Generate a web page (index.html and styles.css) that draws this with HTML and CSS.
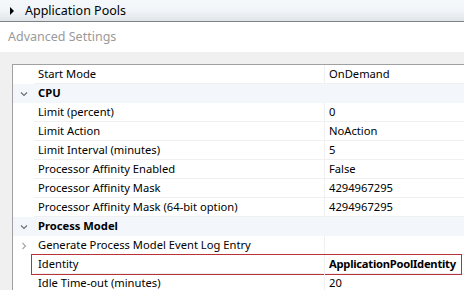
FILE: index.html
```html
<!DOCTYPE html>
<html lang="en">
<head>
  <meta charset="UTF-8" />
  <title>Advanced Settings</title>
  <link rel="stylesheet" href="styles.css">
</head>
<body>
  <div class="topbar">
    <svg class="arrow" width="6" height="8" viewBox="0 0 6 8"><polygon points="1,0 5,4 1,8" fill="#000"/></svg>
    <span>Application Pools</span>
  </div>
  <div class="dialog-title">Advanced Settings</div>
  <div class="panel">
    <div class="grid">
      <div class="row"><div class="gut"></div><div class="name">Start Mode</div><div class="val">OnDemand</div></div>
      <div class="row cat"><div class="gut"><svg width="8" height="6" viewBox="0 0 8 6"><polyline points="1,1.5 4,4.5 7,1.5" fill="none" stroke="#6f6f6f" stroke-width="1.2"/></svg></div><div class="name">CPU</div></div>
      <div class="row"><div class="gut"></div><div class="name">Limit (percent)</div><div class="val">0</div></div>
      <div class="row"><div class="gut"></div><div class="name">Limit Action</div><div class="val">NoAction</div></div>
      <div class="row"><div class="gut"></div><div class="name">Limit Interval (minutes)</div><div class="val">5</div></div>
      <div class="row"><div class="gut"></div><div class="name">Processor Affinity Enabled</div><div class="val">False</div></div>
      <div class="row"><div class="gut"></div><div class="name">Processor Affinity Mask</div><div class="val">4294967295</div></div>
      <div class="row"><div class="gut"></div><div class="name">Processor Affinity Mask (64-bit option)</div><div class="val">4294967295</div></div>
      <div class="row cat"><div class="gut"><svg width="8" height="6" viewBox="0 0 8 6"><polyline points="1,1.5 4,4.5 7,1.5" fill="none" stroke="#6f6f6f" stroke-width="1.2"/></svg></div><div class="name">Process Model</div></div>
      <div class="row"><div class="gut"><svg width="6" height="8" viewBox="0 0 6 8"><polyline points="1.5,1 4.5,4 1.5,7" fill="none" stroke="#a6a6a6" stroke-width="1.2"/></svg></div><div class="name">Generate Process Model Event Log Entry</div><div class="val"></div></div>
      <div class="row selected"><div class="gut"></div><div class="name">Identity</div><div class="val bold">ApplicationPoolIdentity</div></div>
      <div class="row"><div class="gut"></div><div class="name">Idle Time-out (minutes)</div><div class="val">20</div></div>
    </div>
  </div>
</body>
</html>
```

FILE: styles.css
```css
body {
  margin: 0;
  font-family: 'Segoe UI', 'Noto Sans', sans-serif;
  font-size: 11.2px;
  color: #000;
  background: #fff;
  overflow: hidden;
  width: 464px;
  height: 290px;
}
.topbar {
  height: 21px;
  border-bottom: 1px solid #7d8286;
  background: linear-gradient(#f5f8fb, #f1f5f8 50%, #e1e5e9);
  display: flex;
  align-items: center;
  font-size: 12.5px;
}
.topbar .arrow {
  margin-left: 9px;
  margin-right: 10px;
}
.dialog-title {
  height: 30px;
  line-height: 30px;
  padding-left: 8px;
  color: #9a9a9a;
  font-size: 12.5px;
}
.panel {
  background: #f0f0f0;
  padding: 12px 0 0 12px;
  height: 238px;
  box-sizing: border-box;
  overflow: hidden;
}
.grid {
  background: #fff;
  border-top: 1px solid #a0a0a0;
  border-left: 1px solid #a0a0a0;
  height: 100%;
  overflow: hidden;
}
.row {
  display: flex;
  height: 19px;
  position: relative;
}
.gut {
  width: 21px;
  flex: none;
  display: flex;
  align-items: center;
  justify-content: center;
}
.name {
  width: 291px;
  flex: none;
  padding-left: 4px;
  box-sizing: border-box;
  border-bottom: 1px solid #f0f0f0;
  border-right: 1px solid #f0f0f0;
  line-height: 18px;
  white-space: nowrap;
  overflow: hidden;
}
.val {
  flex: 1;
  padding-left: 4px;
  border-bottom: 1px solid #f0f0f0;
  line-height: 18px;
  white-space: nowrap;
}
.bold {
  font-weight: bold;
  letter-spacing: -0.25px;
}
.cat {
  background: #f3f6fb;
}
.cat .name {
  font-weight: bold;
  border-right: none;
  border-bottom: 1px solid #f3f6fb;
  flex: 1;
}
.selected::after {
  content: '';
  position: absolute;
  left: 18px;
  right: 2px;
  top: -1px;
  bottom: -1px;
  border: 1px solid #b8323c;
}
```
